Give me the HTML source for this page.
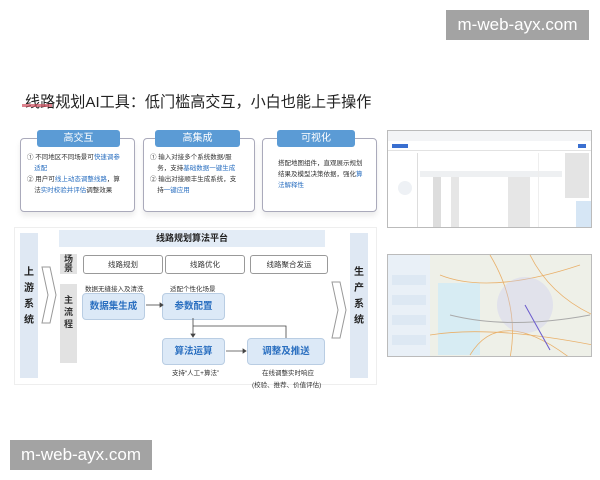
<!DOCTYPE html><html><head><meta charset="utf-8"><style>
*{margin:0;padding:0;box-sizing:border-box}
body{width:600px;height:480px;background:#fff;position:relative;overflow:hidden;font-family:"Liberation Sans","Noto Sans CJK SC",sans-serif;color:#333}
.a{position:absolute}
.wm{background:#a3a3a3;color:#fff;font-size:17px;text-align:center;line-height:30px}
.card{border:1px solid #aab;border-radius:4px;background:#fff;box-shadow:0 4px 6px rgba(0,0,0,.08)}
.tab{background:#5b9bd5;color:#fff;font-size:10px;text-align:center;line-height:17px;border-radius:3px}
.t{font-size:6.5px;line-height:11px;color:#333}
.b{color:#2a6fc0}
.col{background:#dfe8f3;font-size:10px;font-weight:bold;color:#222;text-align:center}
.lab{background:#e2e2e2;font-size:9px;font-weight:bold;color:#333;text-align:center}
.sc{border:1px solid #999;border-radius:3px;font-size:7.5px;text-align:center;line-height:17px;background:#fff}
.fb{background:#dce9f7;border:1px solid #b9cde3;border-radius:4px;color:#2a6fc0;font-size:9.5px;font-weight:bold;text-align:center;line-height:25px}
.s{font-size:6.5px;color:#333}
.shot{border:1px solid #bbb;background:#f7f8fa;overflow:hidden}
</style></head><body>
<div class="a wm" style="left:446px;top:10px;width:143px;height:30px">m-web-ayx.com</div>
<div class="a wm" style="left:10px;top:440px;width:142px;height:30px">m-web-ayx.com</div>
<div class="a" style="left:25px;top:90px;font-size:15.1px;color:#222;white-space:nowrap">线路规划AI工具：低门槛高交互，小白也能上手操作</div>
<div class="a" style="left:22px;top:104px;width:30px;height:3px;background:#d05060;opacity:.7"></div>

<div class="a card" style="left:20px;top:138px;width:115px;height:74px"></div>
<div class="a card" style="left:143px;top:138px;width:112px;height:74px"></div>
<div class="a card" style="left:262px;top:138px;width:115px;height:74px"></div>
<div class="a tab" style="left:37px;top:130px;width:83px">高交互</div>
<div class="a tab" style="left:155px;top:130px;width:85px">高集成</div>
<div class="a tab" style="left:277px;top:130px;width:78px">可视化</div>
<div class="a t" style="left:27px;top:152px;width:105px">① 不同地区不同场景可<span class="b">快速调参<br>&nbsp;&nbsp;&nbsp;&nbsp;适配</span><br>② 用户可<span class="b">线上动态调整线路</span>，算<br>&nbsp;&nbsp;&nbsp;&nbsp;法<span class="b">实时校验并评估</span>调整效果</div>
<div class="a t" style="left:150px;top:152px;width:105px">① 输入对接多个系统数据/服<br>&nbsp;&nbsp;&nbsp;&nbsp;务，支持<span class="b">基础数据一键生成</span><br>② 输出对接顺丰生成系统，支<br>&nbsp;&nbsp;&nbsp;&nbsp;持<span class="b">一键应用</span></div>
<div class="a t" style="left:278px;top:158px;width:95px">搭配地图组件，直观展示规划<br>结果及模型决策依据，强化<span class="b">算<br>法解释性</span></div>

<div class="a" style="left:14px;top:227px;width:363px;height:158px;border:1px solid #eee;background:#fff"></div>
<div class="a col" style="left:20px;top:233px;width:18px;height:145px;padding-top:32px;line-height:16px">上<br>游<br>系<br>统</div>
<div class="a col" style="left:350px;top:233px;width:18px;height:145px;padding-top:32px;line-height:16px">生<br>产<br>系<br>统</div>
<svg class="a" style="left:40px;top:265px" width="18" height="60"><path d="M2 2 L10 2 L16 30 L10 58 L2 58 L8 30 Z" fill="#fff" stroke="#999"/></svg>
<svg class="a" style="left:330px;top:280px" width="18" height="60"><path d="M2 2 L10 2 L16 30 L10 58 L2 58 L8 30 Z" fill="#fff" stroke="#999"/></svg>
<div class="a" style="left:59px;top:230px;width:266px;height:17px;background:#e3ecf6;font-size:9px;font-weight:bold;text-align:center;line-height:17px;color:#222">线路规划算法平台</div>
<div class="a lab" style="left:60px;top:254px;width:17px;height:20px;line-height:9px;padding-top:1px">场<br>景</div>
<div class="a lab" style="left:60px;top:284px;width:17px;height:79px;line-height:12px;padding-top:10px">主<br>流<br>程</div>
<div class="a sc" style="left:83px;top:255px;width:80px">线路规划</div>
<div class="a sc" style="left:165px;top:255px;width:80px">线路优化</div>
<div class="a sc" style="left:250px;top:255px;width:78px">线路聚合发运</div>
<div class="a s" style="left:85px;top:283px">数据无缝接入及清洗</div>
<div class="a s" style="left:170px;top:283px">适配个性化场景</div>
<div class="a fb" style="left:82px;top:293px;width:63px">数据集生成</div>
<div class="a fb" style="left:162px;top:293px;width:63px">参数配置</div>
<div class="a fb" style="left:162px;top:338px;width:63px">算法运算</div>
<div class="a fb" style="left:247px;top:338px;width:78px">调整及推送</div>
<svg class="a" style="left:0;top:0" width="380" height="400"><g stroke="#444" fill="#444" stroke-width=".8"><path d="M146 305 H160" fill="none"/><path d="M160 303 L163 305 L160 307Z"/><path d="M193 318 V336" fill="none"/><path d="M191 334 L193 337 L195 334Z"/><path d="M193 326 H286 V338" fill="none"/><path d="M226 351 H244" fill="none"/><path d="M243 349 L246 351 L243 353Z"/></g></svg>
<div class="a s" style="left:172px;top:367px">支持“人工+算法”</div>
<div class="a s" style="left:262px;top:367px">在线调整实时响应</div>
<div class="a s" style="left:252px;top:379px">(校验、推荐、价值评估)</div>

<div class="a shot" style="left:387px;top:130px;width:205px;height:98px;background:#fff">
<div class="a" style="left:0;top:0;width:205px;height:10px;background:#f3f4f6"></div>
<div class="a" style="left:0;top:10px;width:205px;height:10px;border-bottom:1px solid #e2e2e2"></div>
<div class="a" style="left:4px;top:13px;width:16px;height:4px;background:#3a6fd0"></div>
<div class="a" style="left:190px;top:13px;width:8px;height:4px;background:#3a6fd0"></div>
<div class="a" style="left:0;top:22px;width:30px;height:75px;border-right:1px solid #ddd"></div>
<div class="a" style="left:10px;top:50px;width:14px;height:14px;border-radius:50%;background:#eef1f5"></div>
<div class="a" style="left:32px;top:40px;width:142px;height:6px;background:#eef0f2"></div>
<div class="a" style="left:45px;top:46px;width:8px;height:52px;background:#ddd"></div>
<div class="a" style="left:63px;top:46px;width:8px;height:52px;background:#e6e6e6"></div>
<div class="a" style="left:120px;top:46px;width:22px;height:52px;background:#e6e6e6"></div>
<div class="a" style="left:150px;top:22px;width:25px;height:75px;border-left:1px solid #eee"></div>
<div class="a" style="left:177px;top:22px;width:24px;height:45px;background:#e4e4e4"></div>
<div class="a" style="left:188px;top:70px;width:17px;height:28px;background:#d6e6f5"></div>
</div>
<div class="a shot" style="left:387px;top:254px;width:205px;height:103px;background:#eef0e8">
<div class="a" style="left:0;top:0;width:42px;height:103px;background:#e9f0f7"></div>
<div class="a" style="left:4px;top:20px;width:34px;height:10px;background:#dde8f3"></div>
<div class="a" style="left:4px;top:40px;width:34px;height:10px;background:#dde8f3"></div>
<div class="a" style="left:4px;top:60px;width:34px;height:10px;background:#dde8f3"></div>
<div class="a" style="left:4px;top:80px;width:34px;height:10px;background:#dde8f3"></div>
<div class="a" style="left:50px;top:28px;width:42px;height:72px;background:#d7ecf3"></div>
<svg class="a" style="left:42px;top:0" width="163" height="103"><g fill="none" stroke="#e9b06a" stroke-width=".8"><path d="M10 20 Q60 40 150 10"/><path d="M40 100 Q70 50 140 103"/><path d="M60 0 Q90 50 80 103"/><path d="M100 0 Q120 40 163 60"/><path d="M0 80 Q60 70 163 90"/></g><circle cx="95" cy="50" r="28" fill="#c8c8f0" opacity=".35"/><path d="M20 60 Q80 75 160 60" stroke="#aaa" fill="none"/><path d="M95 50 L120 95" stroke="#6a5acd" stroke-width="1"/></svg>
</div>
</body></html>
